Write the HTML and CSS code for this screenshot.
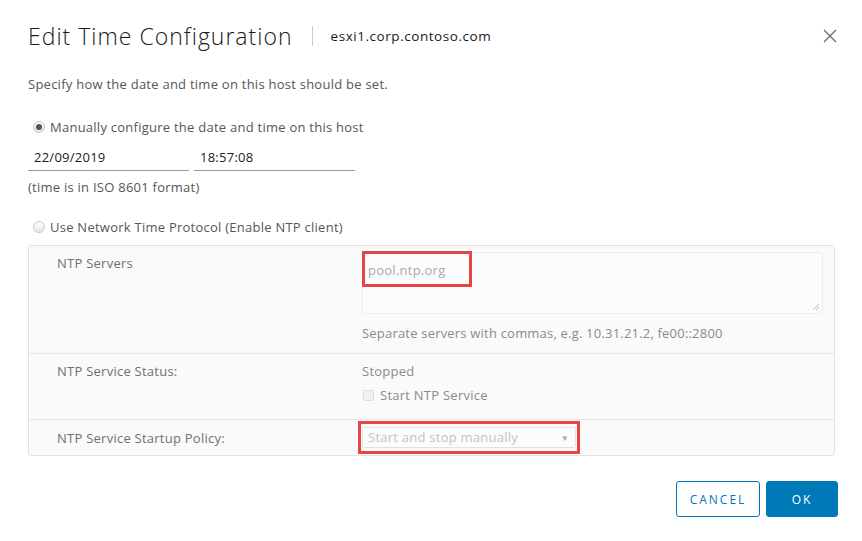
FILE: index.html
```html
<!DOCTYPE html>
<html>
<head>
<meta charset="utf-8">
<link rel="stylesheet" href="styles.css">
</head>
<body>
<div class="dialog">
  <div class="header">
    <h1 class="title">Edit Time Configuration</h1>
    <span class="sep"></span>
    <span class="host">esxi1.corp.contoso.com</span>
    <span class="close">
      <svg width="14" height="14" viewBox="0 0 14 14"><path d="M1 1 L13 13 M13 1 L1 13" stroke="#6a6a6a" stroke-width="1.3" fill="none"/></svg>
    </span>
  </div>
  <p class="intro">Specify how the date and time on this host should be set.</p>

  <label class="radio-row first">
    <span class="radio checked"></span>
    <span>Manually configure the date and time on this host</span>
  </label>
  <div class="inputs">
    <div class="field">22/09/2019</div>
    <div class="field">18:57:08</div>
  </div>
  <p class="note">(time is in ISO 8601 format)</p>

  <label class="radio-row second">
    <span class="radio"></span>
    <span>Use Network Time Protocol (Enable NTP client)</span>
  </label>

  <div class="panel">
    <div class="row row-servers">
      <div class="label">NTP Servers</div>
      <div class="value">
        <div class="textarea">
          <span class="placeholder">pool.ntp.org</span>
          <span class="hl hl-servers"></span>
          <svg class="grip" width="8" height="8" viewBox="0 0 8 8"><path d="M7 1 L1 7 M7 4 L4 7" stroke="#bbb" stroke-width="1"/></svg>
        </div>
        <div class="hint">Separate servers with commas, e.g. 10.31.21.2, fe00::2800</div>
      </div>
    </div>
    <div class="row row-status">
      <div class="label">NTP Service Status:</div>
      <div class="value">
        <div class="status">Stopped</div>
        <label class="check-row"><span class="checkbox"></span><span>Start NTP Service</span></label>
      </div>
    </div>
    <div class="row row-policy">
      <div class="label">NTP Service Startup Policy:</div>
      <div class="value">
        <div class="select">
          <span>Start and stop manually</span>
          <span class="caret">▼</span>
          <span class="hl hl-select"></span>
        </div>
      </div>
    </div>
  </div>

  <div class="footer">
    <button class="btn btn-outline">CANCEL</button>
    <button class="btn btn-primary">OK</button>
  </div>
</div>
</body>
</html>
```

FILE: styles.css
```css
* { box-sizing: border-box; }
html, body { margin: 0; padding: 0; background: #fff; }
body {
  font-family: "Open Sans", "Noto Sans", sans-serif;
  font-size: 13px;
  letter-spacing: 0.25px;
  color: #565656;
  width: 862px;
  height: 541px;
  overflow: hidden;
}
.dialog {
  padding: 0 24px 0 28px;
  display: flex;
  flex-direction: column;
}
.header {
  display: flex;
  align-items: center;
  height: 71px;
}
.title {
  margin: 0;
  font-family: "Open Sans", sans-serif;
  font-weight: 300;
  font-size: 23px;
  color: #1a1a1a;
  letter-spacing: 1px;
}
.sep {
  width: 1px;
  height: 20px;
  background: #ccc;
  margin: 0 18px 0 19px;
}
.host {
  font-size: 13.5px;
  color: #1a1a1a;
  letter-spacing: 0.55px;
}
.close {
  margin-left: auto;
  margin-right: 1px;
  display: flex;
}
.intro { margin: 4px 0 0; line-height: 18px; }
.radio-row {
  display: flex;
  align-items: center;
  gap: 5px;
  margin-left: 5px;
  line-height: 18px;
}
.radio-row.first { margin-top: 25px; }
.radio-row.second { margin-top: 22px; }
.radio {
  width: 12px; height: 12px;
  border-radius: 50%;
  border: 1px solid #c8c8c8;
  background: linear-gradient(#fdfdfd, #e6e6e6);
  position: relative;
}
.radio.checked::after {
  content: "";
  position: absolute;
  left: 2px; top: 2px;
  width: 6px; height: 6px;
  border-radius: 50%;
  background: #555;
}
.inputs {
  display: flex;
  gap: 5px;
  margin-top: 12px;
}
.field {
  width: 161px;
  height: 23px;
  border-bottom: 1px solid #9a9a9a;
  padding-left: 6px;
  line-height: 18px;
  color: #222;
}
.note { margin: 7px 0 0; line-height: 18px; }
.panel {
  margin-top: 9px;
  width: 807px;
  border: 1px solid #e2e2e2;
  border-radius: 3px;
  background: #fafafa;
  color: #707070;
}
.row {
  display: grid;
  grid-template-columns: 333px 1fr;
  border-top: 1px solid #e6e6e6;
}
.row:first-child { border-top: none; }
.label { padding-left: 28px; line-height: 18px; }
.row-servers { height: 107px; padding-top: 8px; }
.row-status { height: 66px; padding-top: 8px; }
.row-policy { height: 36px; align-items: center; }
.textarea {
  position: relative;
  width: 461px;
  height: 62px;
  border: 1px solid #ececec;
  border-radius: 3px;
  background: #fcfcfc;
  margin-top: -2px;
}
.placeholder {
  position: absolute;
  left: 5px; top: 8px;
  color: #aaa;
  line-height: 18px;
}
.hl {
  position: absolute;
  border: 3px solid #e84445;
}
.hl-servers { left: -1px; top: -2px; width: 110px; height: 36px; }
.grip { position: absolute; right: 2px; bottom: 2px; }
.hint { margin-top: 10px; line-height: 18px; color: #8a8a8a; letter-spacing: 0.2px; }
.status { line-height: 18px; color: #8a8a8a; }
.check-row {
  display: flex;
  align-items: center;
  gap: 6px;
  margin-top: 6px;
  line-height: 18px;
  color: #8a8a8a;
}
.checkbox {
  width: 11px; height: 11px;
  border: 1px solid #ddd;
  border-radius: 2px;
  background: #f1f1f1;
  margin-left: 1px;
}
.select {
  position: relative;
  width: 214px;
  height: 21px;
  border: 1px solid #e2e2e2;
  border-radius: 2px;
  background: #fcfcfc;
  padding-left: 5px;
  line-height: 19px;
  color: #c3c3c3;
  display: flex;
  align-items: center;
}
.caret {
  margin-left: auto;
  margin-right: 6px;
  font-size: 8px;
  color: #aaa;
}
.hl-select { left: -5px; top: -7px; width: 222px; height: 33px; }
.footer {
  display: flex;
  justify-content: flex-end;
  gap: 6px;
  margin-top: 25px;
}
.btn {
  height: 36px;
  border-radius: 3px;
  font-family: "Open Sans", sans-serif;
  font-size: 12px;
  letter-spacing: 2px;
  font-weight: 400;
  cursor: pointer;
}
.btn-outline {
  width: 84px;
  border: 1px solid #0079b8;
  background: #fff;
  color: #0079b8;
}
.btn-primary {
  width: 72px;
  border: 1px solid #0079b8;
  background: #0079b8;
  color: #fff;
}
```
